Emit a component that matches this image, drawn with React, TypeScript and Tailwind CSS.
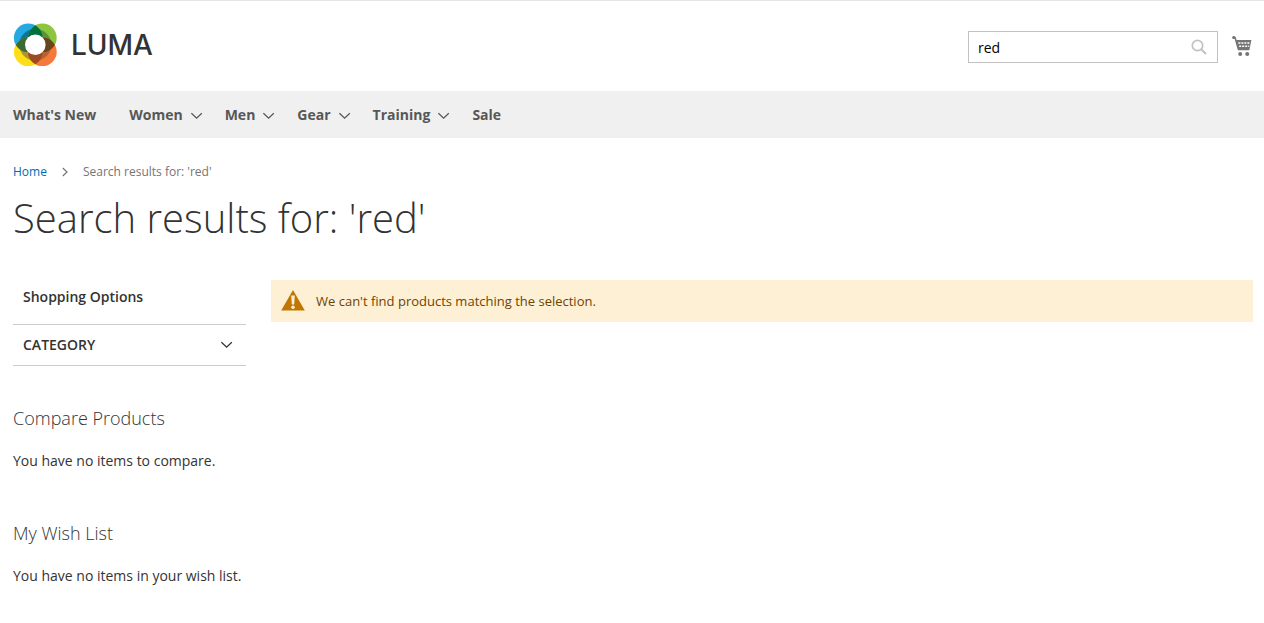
import React, { useState } from "react";

function Chevron({ className = "" }: { className?: string }) {
  return (
    <svg viewBox="0 0 12 8" className={`h-2 w-3 ${className}`} fill="none" stroke="currentColor" strokeWidth="1.3" aria-hidden="true">
      <path d="M0.4 1.2 L5.6 6.2 L10.8 1.2" />
    </svg>
  );
}

function LogoMark() {
  return (
    <svg viewBox="0 0 44 44" className="h-11 w-11" aria-hidden="true">
      <defs>
        <clipPath id="tl"><circle cx="15.2" cy="14.8" r="14.3" /></clipPath>
        <clipPath id="tr"><circle cx="29.4" cy="14.8" r="14.3" /></clipPath>
        <clipPath id="bl"><circle cx="15.2" cy="28.8" r="14.3" /></clipPath>
        <clipPath id="br"><circle cx="29.4" cy="28.8" r="14.3" /></clipPath>
      </defs>
      <circle cx="15.2" cy="14.8" r="14.3" fill="#26a9e0" />
      <circle cx="29.4" cy="14.8" r="14.3" fill="#8cc63f" />
      <circle cx="15.2" cy="28.8" r="14.3" fill="#ffde17" />
      <circle cx="29.4" cy="28.8" r="14.3" fill="#f4793b" />
      <g clipPath="url(#tl)"><circle cx="22.3" cy="21.8" r="16" fill="#0c7499" /></g>
      <g clipPath="url(#tr)"><circle cx="22.3" cy="21.8" r="16" fill="#5b9438" /></g>
      <g clipPath="url(#bl)"><circle cx="22.3" cy="21.8" r="16" fill="#a8962f" /></g>
      <g clipPath="url(#br)"><circle cx="22.3" cy="21.8" r="16" fill="#b5622f" /></g>
      <g clipPath="url(#tl)"><circle cx="29.4" cy="14.8" r="14.3" fill="#00703c" /></g>
      <g clipPath="url(#tl)"><circle cx="15.2" cy="28.8" r="14.3" fill="#3a6b35" /></g>
      <g clipPath="url(#bl)"><circle cx="29.4" cy="28.8" r="14.3" fill="#a04a23" /></g>
      <g clipPath="url(#tr)"><circle cx="29.4" cy="28.8" r="14.3" fill="#66461d" /></g>
      <circle cx="22.3" cy="21.8" r="10.3" fill="#ffffff" />
    </svg>
  );
}

function CartIcon() {
  return (
    <svg viewBox="0 1 20 22" className="h-[22px] w-5" aria-hidden="true">
      <path d="M1.2 2.4 H3 L6.4 14.4 H17" fill="none" stroke="#757575" strokeWidth="1.6" strokeLinejoin="round" />
      <circle cx="1.6" cy="2.6" r="1.5" fill="#757575" />
      <path d="M4 5 H19.4 L17.4 15 H6.4 Z" fill="#757575" />
      <path d="M6.4 8 H17.8 M7.2 11.2 H17.2" stroke="#ffffff" strokeWidth="1.6" strokeDasharray="2 1" />
      <circle cx="8.2" cy="19" r="2" fill="#757575" />
      <circle cx="15.2" cy="19" r="2" fill="#757575" />
    </svg>
  );
}

const navItems = [
  { label: "What's New", menu: false },
  { label: "Women", menu: true },
  { label: "Men", menu: true },
  { label: "Gear", menu: true },
  { label: "Training", menu: true },
  { label: "Sale", menu: false },
];

function SideBlock({ title, text }: { title: string; text: string }) {
  return (
    <section>
      <h2 className="text-[18px] leading-5 font-light">{title}</h2>
      <p className="mt-[23px] text-sm leading-5">{text}</p>
    </section>
  );
}

export default function App() {
  const [query, setQuery] = useState("red");
  return (
    <div className="bg-white font-['Open_Sans','Noto_Sans',sans-serif] text-sm text-[#333333]">
      <header className="flex h-[91px] items-center justify-between border-t border-[#e5e5e5] pr-3 pb-0.5 pl-[13px]">
        <a href="#home" aria-label="LUMA" className="flex items-center gap-3.5">
          <LogoMark />
          <span className="font-['Inter',sans-serif] text-[28px] leading-8 font-medium">LUMA</span>
        </a>
        <div className="flex items-center gap-3.5 pt-1">
          <form role="search" onSubmit={(e) => e.preventDefault()} className="flex h-8 w-[250px] items-center border border-[#c2c2c2] px-[9px]">
            <input
              aria-label="Search"
              value={query}
              onChange={(e) => setQuery(e.target.value)}
              className="min-w-0 flex-1 bg-transparent pt-0.5 text-sm text-black outline-none"
            />
            <button type="submit" aria-label="Search" className="p-px">
              <svg viewBox="0 0 16 16" className="h-4 w-4" fill="none" stroke="#c2c2c2" aria-hidden="true">
                <circle cx="6.5" cy="6.5" r="5.2" strokeWidth="1.7" />
                <path d="M10.2 10.2 L15 15" strokeWidth="2.2" />
              </svg>
            </button>
          </form>
          <a href="#cart" aria-label="My Cart"><CartIcon /></a>
        </div>
      </header>

      <nav className="bg-[#f0f0f0] px-[13px]">
        <ul className="flex h-[47px] items-center font-bold text-[#575757]">
          {navItems.map((item) => (
            <li key={item.label} className={item.menu ? "mr-[22px]" : "mr-[33px]"}>
              <a href="#category" className="flex items-center gap-2">
                {item.label}
                {item.menu && <Chevron className="mt-0.5" />}
              </a>
            </li>
          ))}
        </ul>
      </nav>

      <div className="px-[13px] pt-[25px]">
        <nav aria-label="Breadcrumb" className="flex items-center text-xs leading-[18px] text-[#757575]">
          <a href="#home" className="text-[#006bb4]">Home</a>
          <svg viewBox="0 0 6 10" className="mx-[15px] h-2.5 w-1.5" fill="none" stroke="currentColor" strokeWidth="1.2" aria-hidden="true">
            <path d="M0.8 1 L5 5 L0.8 9" />
          </svg>
          <span>Search results for: 'red'</span>
        </nav>
        <h1 className="mt-[15px] text-[40px] leading-[44px] font-light">Search results for: 'red'</h1>
      </div>

      <div className="flex items-start gap-[25px] pt-10 pr-[11px] pb-8 pl-[13px]">
        <aside className="w-[233px] shrink-0">
          <h2 className="px-2.5 pt-[7px] pb-[17px] text-sm leading-5 font-semibold">Shopping Options</h2>
          <button type="button" className="flex w-full items-center justify-between border-y border-[#cccccc] py-2.5 pr-[13px] pl-2.5 text-sm leading-5 font-semibold uppercase">
            Category
            <Chevron />
          </button>
          <div className="mt-[42px] flex flex-col gap-[52px]">
            <SideBlock title="Compare Products" text="You have no items to compare." />
            <SideBlock title="My Wish List" text="You have no items in your wish list." />
          </div>
        </aside>
        <main className="flex-1">
          <div role="status" className="flex items-center gap-[11px] bg-[#fdf0d5] p-2.5 text-[13px] leading-[18px] text-[#6f4400]">
            <svg viewBox="0 0 24 22" className="h-[22px] w-6" aria-hidden="true">
              <path d="M12 0 L23.8 20.4 H0.2 Z" fill="#c07600" />
              <path d="M10.2 5.4 H13.8 L13.2 14.4 H10.8 Z" fill="#fdf0d5" />
              <circle cx="12" cy="17.2" r="1.8" fill="#fdf0d5" />
            </svg>
            <p>We can't find products matching the selection.</p>
          </div>
        </main>
      </div>
    </div>
  );
}
